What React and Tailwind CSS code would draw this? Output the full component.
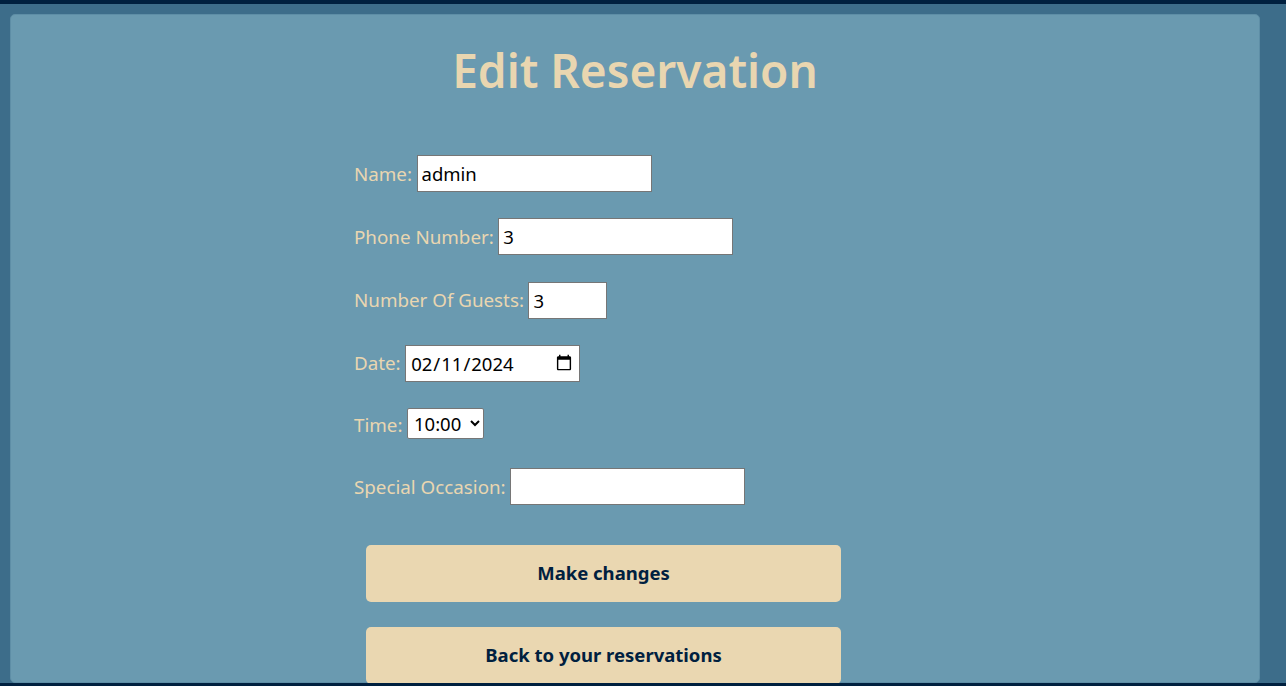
import React, { useState } from 'react'

const Field = ({ label, children, h = 'h-[37px] items-center' }) => (
  <div className={`flex ${h}`}>
    <label className="text-[18.8px] text-[#e9d6b0] mr-[4.5px] whitespace-nowrap self-center">{label}</label>
    {children}
  </div>
)

const inputCls =
  'h-[37px] bg-white border border-[#767676] px-[4px] text-[18.5px] text-black outline-none'

const App = () => {
  const [name, setName] = useState('admin')
  const [phone, setPhone] = useState('3')
  const [guests, setGuests] = useState('3')
  const [date, setDate] = useState('2024-02-11')
  const [time, setTime] = useState('10:00')
  const [occasion, setOccasion] = useState('')

  return (
    <div
      className="h-[686px] overflow-hidden flex flex-col bg-[#3d6d8a]"
      style={{ fontFamily: '"Noto Sans", "Open Sans", sans-serif' }}
    >
      <div className="h-[4px] bg-[#00203f] shrink-0"></div>
      <main className="flex-1 min-h-0 pl-[10px] pr-[26px] pt-[10px]">
        <div className="h-full bg-[#6a9ab0] border border-[#5e8ea6] rounded-[5px]">
          <h1 className="text-center text-[46px] font-semibold text-[#e9d6b0] pt-[28px] leading-[1.2]">
            Edit Reservation
          </h1>

          <form
            className="ml-[343px] mt-[57px] w-[500px] flex flex-col gap-[26.25px]"
            onSubmit={(e) => e.preventDefault()}
          >
            <Field label="Name:">
              <input className={`${inputCls} w-[235px]`} value={name} onChange={(e) => setName(e.target.value)} />
            </Field>
            <Field label="Phone Number:">
              <input className={`${inputCls} w-[235px]`} value={phone} onChange={(e) => setPhone(e.target.value)} />
            </Field>
            <Field label="Number Of Guests:">
              <input className={`${inputCls} w-[79px]`} value={guests} onChange={(e) => setGuests(e.target.value)} />
            </Field>
            <Field label="Date:">
              <input type="date" className={`${inputCls} w-[175px]`} value={date} onChange={(e) => setDate(e.target.value)} />
            </Field>
            <Field label="Time:" h="h-[34px] items-start">
              <select
                className="h-[31px] w-[77px] bg-white border border-[#767676] rounded-[2px] px-[2px] text-[18.5px] text-black"
                value={time}
                onChange={(e) => setTime(e.target.value)}
              >
                <option>10:00</option>
                <option>11:00</option>
                <option>12:00</option>
              </select>
            </Field>
            <Field label="Special Occasion:">
              <input className={`${inputCls} w-[235px]`} value={occasion} onChange={(e) => setOccasion(e.target.value)} />
            </Field>

            <div className="flex flex-col gap-[25px] mt-[13px] px-[12px]">
              <button type="submit" className="h-[57px] w-[475px] rounded-[5px] bg-[#ead7b1] text-[#00203f] text-[18.5px] font-bold">
                Make changes
              </button>
              <button type="button" className="h-[57px] w-[475px] rounded-[5px] bg-[#ead7b1] text-[#00203f] text-[18.5px] font-bold">
                Back to your reservations
              </button>
            </div>
          </form>
        </div>
      </main>
      <div className="h-[3px] bg-[#00203f] shrink-0"></div>
    </div>
  )
}

export default App
